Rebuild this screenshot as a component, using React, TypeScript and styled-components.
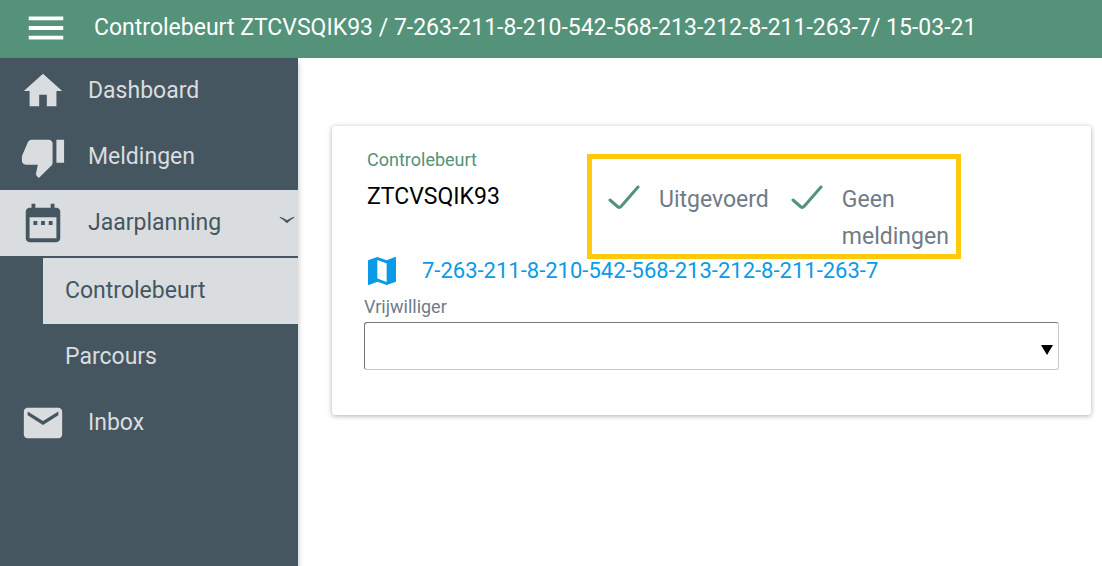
import React from "react";
import styled, { createGlobalStyle } from "styled-components";

const GlobalStyle = createGlobalStyle`
  *, *::before, *::after { box-sizing: border-box; }
  body { margin: 0; background: #fff; font-family: Roboto, "Liberation Sans", sans-serif; }
  ul { list-style: none; margin: 0; padding: 0; }
`;

const Page = styled.div`
  display: flex;
  flex-direction: column;
  min-height: 100vh;
`;

const TopBar = styled.header`
  display: flex;
  align-items: center;
  gap: 25px;
  height: 58px;
  padding: 0 0 2px 23px;
  background: #549279;
  color: #fff;
`;

const MenuButton = styled.button`
  display: flex;
  padding: 0;
  border: 0;
  background: none;
  color: inherit;
  cursor: pointer;
`;

const Title = styled.h1`
  margin: 0;
  font-size: 23px;
  line-height: 32px;
  font-weight: 400;
`;

const Body = styled.div`
  display: flex;
  flex: 1;
`;

const Sidebar = styled.nav`
  flex: none;
  width: 298px;
  background: #465660;
  box-shadow: 0 4px 6px rgba(0, 0, 0, 0.25);
`;

const NavLink = styled.a<{ $active?: boolean }>`
  display: flex;
  align-items: center;
  gap: 22px;
  height: 66px;
  padding: 0 3px 0 20px;
  font-size: 23px;
  line-height: 32px;
  text-decoration: none;
  color: ${(p) => (p.$active ? "#465660" : "#d9dddf")};
  background: ${(p) => (p.$active ? "#d9dddf" : "transparent")};
`;

const NavLabel = styled.span`
  flex: 1;
`;

const SubMenu = styled.ul`
  && { margin: 2px 0 0 43px; }
`;

const SubLink = styled(NavLink)`
  padding-left: 22px;
`;

const Main = styled.main`
  flex: 1;
  min-width: 0;
  padding: 68px 11px 32px 34px;
`;

const Card = styled.section`
  padding: 22px 32px 45px;
  border-radius: 3px;
  background: #fff;
  box-shadow: 0 1px 5px rgba(0, 0, 0, 0.32);
`;

const Summary = styled.div`
  display: grid;
  grid-template-columns: 223px minmax(0, 374px);
  align-items: start;
`;

const Round = styled.div`
  display: flex;
  flex-direction: column;
  gap: 6px;
  padding-left: 3px;
`;

const RoundLabel = styled.span`
  font-size: 18px;
  line-height: 24px;
  color: #549279;
`;

const RoundValue = styled.span`
  font-size: 23px;
  line-height: 38px;
  color: #000;
`;

const StatusBox = styled.ul`
  && {
    display: flex;
    gap: 22px;
    margin-top: 6px;
    padding: 22px 0 0 16px;
    height: 105px;
    border: 5px solid #ffc90e;
  }
`;

const Status = styled.li`
  display: flex;
  gap: 19px;
  font-size: 23px;
  line-height: 37px;
  color: #6f7b86;

  svg { flex: none; margin-top: 4px; }
`;

const Route = styled.a`
  display: flex;
  align-items: center;
  gap: 26px;
  height: 24px;
  padding-left: 4px;
  font-size: 22px;
  line-height: 26px;
  color: #0a9ae8;
  text-decoration: none;

  svg { flex: none; }
`;

const FieldLabel = styled.label`
  display: block;
  margin: 12px 0 3px;
  font-size: 18px;
  line-height: 24px;
  color: #6f7b86;
`;

const SelectWrap = styled.div`
  display: grid;
  align-items: center;

  > * { grid-area: 1 / 1; }
  svg { justify-self: end; margin: 8px 6px 0 0; pointer-events: none; }
`;

const Select = styled.select`
  appearance: none;
  width: 100%;
  height: 48px;
  padding: 0 24px 0 4px;
  border: 1px solid;
  border-color: #767676 #c9c9c9 #c9c9c9 #767676;
  border-radius: 3px;
  background: #fff;
  font: inherit;
  font-size: 23px;
`;

const icons = {
  menu: "M3 18h18v-2H3v2zm0-5h18v-2H3v2zm0-7v2h18V6H3z",
  home: "M10 20v-6h4v6h5v-8h3L12 3 2 12h3v8z",
  thumbDown:
    "M15 3H6c-.83 0-1.54.5-1.84 1.22l-3.02 7.05c-.09.23-.14.47-.14.73v1.91l.01.01L1 14c0 1.1.9 2 2 2h6.31l-.95 4.57-.03.32c0 .41.17.79.44 1.06L9.83 23l6.59-6.59c.36-.36.58-.86.58-1.41V5c0-1.1-.9-2-2-2zm4 0v12h4V3h-4z",
  calendar:
    "M9 11H7v2h2v-2zm4 0h-2v2h2v-2zm4 0h-2v2h2v-2zm2-7h-1V2h-2v2H8V2H6v2H5c-1.11 0-1.99.9-1.99 2L3 20c0 1.1.89 2 2 2h14c1.1 0 2-.9 2-2V6c0-1.1-.9-2-2-2zm0 16H5V9h14v11z",
  mail: "M20 4H4c-1.1 0-1.99.9-1.99 2L2 18c0 1.1.9 2 2 2h16c1.1 0 2-.9 2-2V6c0-1.1-.9-2-2-2zm0 4l-8 5-8-5V6l8 5 8-5v2z",
};

const Icon = ({ name }: { name: keyof typeof icons }) => (
  <svg width="46" height="46" viewBox="0 0 24 24" fill="currentColor" aria-hidden="true">
    <path d={icons[name]} />
  </svg>
);

const Check = () => (
  <svg width="32" height="25" viewBox="0 0 32 25" fill="none" stroke="#549279" strokeWidth="3" strokeLinecap="round" strokeLinejoin="round" aria-hidden="true">
    <path d="M2 15l8 7q1.500 1 3-.5L30 2" />
  </svg>
);

export default function App() {
  return (
    <>
      <GlobalStyle />
      <Page>
        <TopBar>
          <MenuButton type="button" aria-label="Menu">
            <Icon name="menu" />
          </MenuButton>
          <Title>Controlebeurt ZTCVSQIK93 / 7-263-211-8-210-542-568-213-212-8-211-263-7/ 15-03-21</Title>
        </TopBar>
        <Body>
          <Sidebar>
            <ul>
              <li>
                <NavLink href="#dashboard"><Icon name="home" /><NavLabel>Dashboard</NavLabel></NavLink>
              </li>
              <li>
                <NavLink href="#meldingen"><Icon name="thumbDown" /><NavLabel>Meldingen</NavLabel></NavLink>
              </li>
              <li>
                <NavLink href="#jaarplanning" $active>
                  <Icon name="calendar" />
                  <NavLabel>Jaarplanning</NavLabel>
                  <svg width="16" height="14" viewBox="0 0 16 14" fill="currentColor" aria-hidden="true">
                    <path d="M.8.8Q5 1.800 8 4.300Q11 1.800 15.200.8L15.200 1.800Q11 4 8 7.300Q5 4 .8 1.800z" />
                  </svg>
                </NavLink>
                <SubMenu>
                  <li><SubLink href="#controlebeurt" $active>Controlebeurt</SubLink></li>
                  <li><SubLink href="#parcours">Parcours</SubLink></li>
                </SubMenu>
              </li>
              <li>
                <NavLink href="#inbox"><Icon name="mail" /><NavLabel>Inbox</NavLabel></NavLink>
              </li>
            </ul>
          </Sidebar>
          <Main>
            <Card>
              <Summary>
                <Round>
                  <RoundLabel>Controlebeurt</RoundLabel>
                  <RoundValue>ZTCVSQIK93</RoundValue>
                </Round>
                <StatusBox>
                  <Status><Check />Uitgevoerd</Status>
                  <Status><Check />Geen meldingen</Status>
                </StatusBox>
              </Summary>
              <Route href="#route">
                <svg width="28" height="28" viewBox="3 3 18 18" fill="currentColor" aria-hidden="true">
                  <path d="M20.500 3l-.16.03L15 5.100 9 3 3.360 4.900c-.21.07-.36.25-.36.48V20.500c0 .28.22.5.5.5l.16-.03L9 18.900l6 2.100 5.640-1.900c.21-.07.36-.25.36-.48V3.500c0-.28-.22-.5-.5-.5zM15 19l-6-2.110V5l6 2.110V19z" />
                </svg>
                7-263-211-8-210-542-568-213-212-8-211-263-7
              </Route>
              <FieldLabel htmlFor="vrijwilliger">Vrijwilliger</FieldLabel>
              <SelectWrap>
                <Select id="vrijwilliger" defaultValue="">
                  <option value="" />
                </Select>
                <svg width="12" height="10" viewBox="0 0 12 10" aria-hidden="true">
                  <path d="M0 0h12L6 10z" />
                </svg>
              </SelectWrap>
            </Card>
          </Main>
        </Body>
      </Page>
    </>
  );
}
